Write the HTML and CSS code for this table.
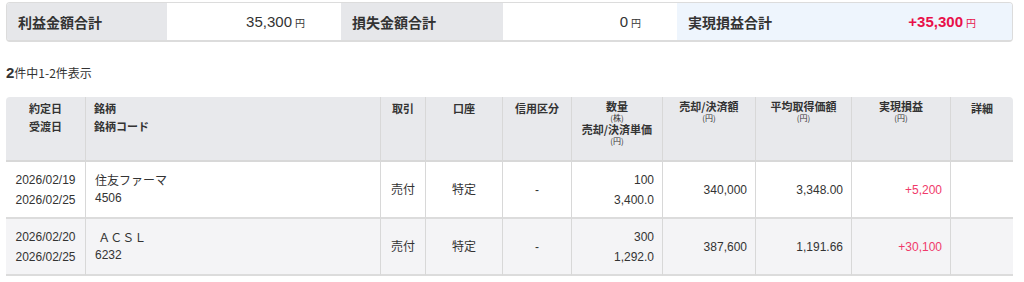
FILE: index.html
```html
<!DOCTYPE html>
<html lang="ja">
<head>
<meta charset="utf-8">
<link rel="stylesheet" href="styles.css">
</head>
<body>
<div class="summary">
  <div class="s-label">利益金額合計</div>
  <div class="s-value">35,300<span class="yen">円</span></div>
  <div class="s-label">損失金額合計</div>
  <div class="s-value">0<span class="yen">円</span></div>
  <div class="s-label s-blue">実現損益合計</div>
  <div class="s-value s-blue plus">+35,300<span class="yen">円</span></div>
</div>

<div class="count"><b>2</b>件中1-2件表示</div>

<table class="tbl">
  <colgroup>
    <col style="width:80px"><col style="width:295px"><col style="width:45px"><col style="width:77px"><col style="width:69px"><col style="width:91px"><col style="width:93px"><col style="width:96px"><col style="width:99px"><col style="width:62px">
  </colgroup>
  <thead>
    <tr>
      <th class="c two">約定日<br>受渡日</th>
      <th class="l two">銘柄<br>銘柄コード</th>
      <th class="c two">取引</th>
      <th class="c two">口座</th>
      <th class="c two">信用区分</th>
      <th class="c stack"><div class="hl">数量</div><div class="unit">(株)</div><div class="hl">売却/決済単価</div><div class="unit">(円)</div></th>
      <th class="c stack"><div class="hl">売却/決済額</div><div class="unit">(円)</div></th>
      <th class="c stack"><div class="hl">平均取得価額</div><div class="unit">(円)</div></th>
      <th class="c stack"><div class="hl">実現損益</div><div class="unit">(円)</div></th>
      <th class="c two">詳細</th>
    </tr>
  </thead>
  <tbody>
    <tr>
      <td class="c dates">2026/02/19<br>2026/02/25</td>
      <td class="l name">住友ファーマ<br>4506</td>
      <td class="c">売付</td>
      <td class="c">特定</td>
      <td class="c">-</td>
      <td class="r dates">100<br>3,400.0</td>
      <td class="r">340,000</td>
      <td class="r">3,348.00</td>
      <td class="r plus2">+5,200</td>
      <td></td>
    </tr>
    <tr class="alt">
      <td class="c dates">2026/02/20<br>2026/02/25</td>
      <td class="l name">&nbsp;ＡＣＳＬ<br>6232</td>
      <td class="c">売付</td>
      <td class="c">特定</td>
      <td class="c">-</td>
      <td class="r dates">300<br>1,292.0</td>
      <td class="r">387,600</td>
      <td class="r">1,191.66</td>
      <td class="r plus2">+30,100</td>
      <td></td>
    </tr>
  </tbody>
</table>
</body>
</html>
```
FILE: styles.css
```css
* { box-sizing: border-box; }
body {
  margin: 0;
  padding: 2px 11px 0 6px;
  font-family: "Liberation Sans", "Noto Sans CJK JP", sans-serif;
  color: #333;
  background: #fff;
}
.summary {
  display: grid;
  grid-template-columns: 160px 174px 162px 174px 163px 1fr;
  height: 40px;
  border: 1px solid #dcdcdc;
  border-width: 1px 1px 2px 1px;
  border-radius: 4px;
  overflow: hidden;
}
.s-label {
  background: #e6e7ea;
  display: flex;
  align-items: center;
  padding-left: 11px;
  font-weight: bold;
  font-size: 14px;
  color: #333;
  font-family: "Noto Sans CJK JP", sans-serif;
}
.s-value {
  background: #fff;
  display: flex;
  align-items: center;
  justify-content: flex-end;
  padding-right: 36px;
  font-size: 15px;
  color: #333;
}
.s-blue { background: #eef5fd; }
.s-value .yen {
  font-size: 10px;
  margin-left: 3px;
  font-family: "Noto Sans CJK JP", sans-serif;
  padding-top: 2px;
}
.s-value.plus {
  color: #e8104a;
  font-weight: bold;
}
.s-value.plus .yen { font-weight: normal; }
.count {
  margin-top: 22px;
  font-size: 12px;
  color: #333;
  font-family: "Noto Sans CJK JP", sans-serif;
}
.count b { font-size: 15px; font-family: "Liberation Sans", sans-serif; }
.tbl {
  margin-top: 16px;
  width: 1007px;
  border-collapse: separate;
  border-spacing: 0;
  table-layout: fixed;
  font-size: 12px;
}
.tbl th {
  background: #e8e9ec;
  font-size: 11px;
  font-weight: bold;
  color: #333;
  vertical-align: top;
  padding: 2px 8px 0;
  height: 65px;
  line-height: 18px;
  border-right: 1px solid #d8d8d8;
  border-bottom: 2px solid #d8d8d8;
  font-family: "Noto Sans CJK JP", sans-serif;
}
.tbl th.stack { padding-top: 3px; }
.tbl th .hl { line-height: 13px; }
.tbl th .unit {
  font-size: 8px;
  font-weight: normal;
  line-height: 10px;
}
.tbl th:first-child { border-top-left-radius: 4px; }
.tbl th:last-child { border-top-right-radius: 4px; border-right: none; }
.tbl td {
  border-right: 1px solid #d8d8d8;
  border-bottom: 2px solid #dcdcdc;
  height: 57px;
  padding: 0 8px;
  color: #333;
  line-height: 20px;
  vertical-align: middle;
}
.tbl td:last-child { border-right: none; }
.tbl td.name { line-height: 17px; padding-left: 9px; }
.tbl tr.alt td { background: #f4f4f6; }
.c { text-align: center; }
.l { text-align: left; }
.r { text-align: right; }
.tbl td.plus2 { color: #f03a6a; }
```
